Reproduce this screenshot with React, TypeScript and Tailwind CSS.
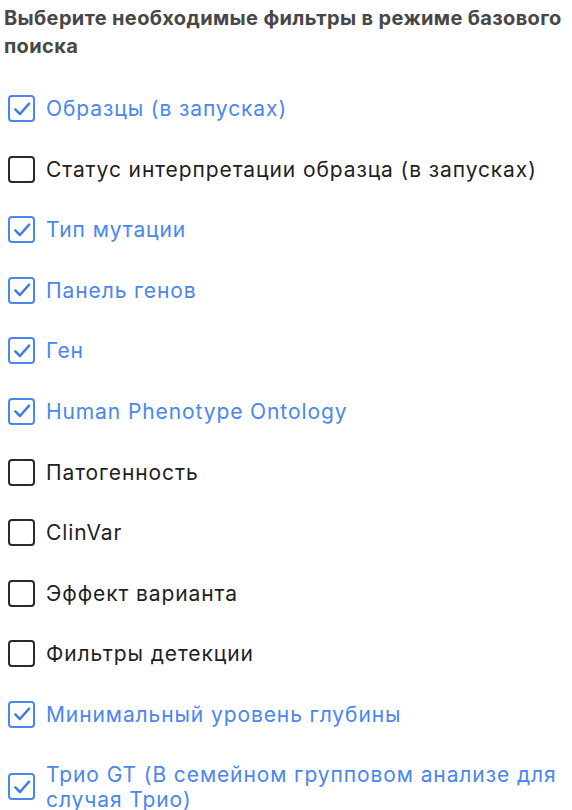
import React from "react";

const items: { label: string; checked: boolean }[] = [
  { label: "Образцы (в запусках)", checked: true },
  { label: "Статус интерпретации образца (в запусках)", checked: false },
  { label: "Тип мутации", checked: true },
  { label: "Панель генов", checked: true },
  { label: "Ген", checked: true },
  { label: "Human Phenotype Ontology", checked: true },
  { label: "Патогенность", checked: false },
  { label: "ClinVar", checked: false },
  { label: "Эффект варианта", checked: false },
  { label: "Фильтры детекции", checked: false },
  { label: "Минимальный уровень глубины", checked: true },
  { label: "Трио GT (В семейном групповом анализе для случая Трио)", checked: true },
];

function Box({ checked }: { checked: boolean }) {
  return checked ? (
    <span className="flex h-[27px] w-[27px] shrink-0 items-center justify-center rounded-[4px] border-2 border-[#4a86f0] bg-white">
      <svg width="20" height="20" viewBox="0 0 24 24" fill="none" stroke="#3f7ee8" strokeWidth="3" strokeLinecap="round" strokeLinejoin="round">
        <path d="M4 12.5l5.5 5.5L20.5 5.5" />
      </svg>
    </span>
  ) : (
    <span className="h-[27px] w-[27px] shrink-0 rounded-[4px] border-2 border-[#2a2a2a] bg-white" />
  );
}

export default function App() {
  return (
    <div className="bg-white pl-[4px] pt-[4px]" style={{ fontFamily: "Inter, 'Noto Sans', sans-serif" }}>
      <h1 className="text-[20px] font-bold leading-[28px] tracking-[0.35px] text-[#474747]">
        Выберите необходимые фильтры в режиме базового поиска
      </h1>
      <div className="mt-[35px] flex flex-col gap-[33.6px] pl-[4px] pr-[6px]">
        {items.map((it) => (
          <label key={it.label} className="flex items-center gap-[11px]">
            <Box checked={it.checked} />
            <span
              className={
                "text-[21px] leading-[25px] tracking-[0.9px] " +
                (it.checked ? "text-[#4a86f0]" : "text-[#1f1f1f]")
              }
            >
              {it.label}
            </span>
          </label>
        ))}
      </div>
    </div>
  );
}
